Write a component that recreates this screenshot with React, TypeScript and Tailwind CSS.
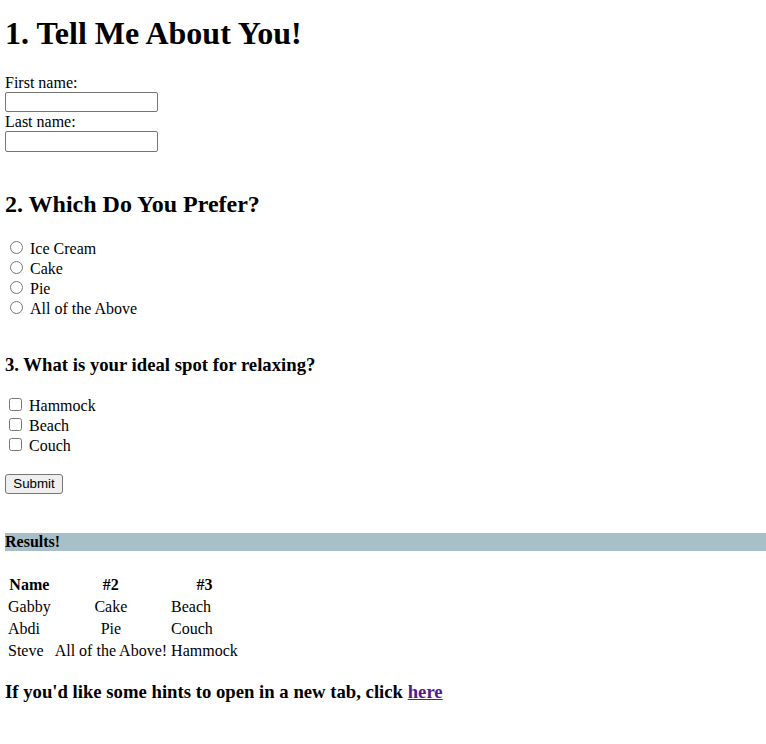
import React from 'react';

const FLAVORS = ['Ice Cream', 'Cake', 'Pie', 'All of the Above'];
const SPOTS = ['Hammock', 'Beach', 'Couch'];
const RESULTS = [
  { name: 'Gabby', second: 'Cake', third: 'Beach' },
  { name: 'Abdi', second: 'Pie', third: 'Couch' },
  { name: 'Steve', second: 'All of the Above!', third: 'Hammock' },
];

export default function App() {
  return (
    <div className="min-h-[744px] bg-white pl-[5px] pt-[15px] font-['Liberation_Serif',serif] text-[16px] text-black">
      <h1 className="text-[32px] font-bold leading-[37px]">1. Tell Me About You!</h1>

      <form className="mt-[21px]" onSubmit={e => e.preventDefault()}>
        <div className="h-[19px] leading-[19px]">First name:</div>
        <input type="text" className="block h-[20px] w-[153px] rounded-[2px] border border-[#767676] bg-white px-[2px]" />
        <div className="h-[19px] leading-[19px]">Last name:</div>
        <input type="text" className="block h-[21px] w-[153px] rounded-[2px] border border-[#767676] bg-white px-[2px]" />

        <h2 className="mt-[38px] text-[24px] font-bold leading-[28px]">2. Which Do You Prefer?</h2>
        <div className="mt-[21px]">
          {FLAVORS.map(f => (
            <label key={f} className="flex h-[20px] leading-[20px]">
              <input type="radio" name="flavor" className="mt-[2px] ml-[5px] mr-[7px] h-[13px] w-[13px] shrink-0" />
              <span>{f}</span>
            </label>
          ))}
        </div>

        <h3 className="mt-[35px] text-[18.72px] font-bold leading-[21px]">3. What is your ideal spot for relaxing?</h3>
        <div className="mt-[21px]">
          {SPOTS.map(s => (
            <label key={s} className="flex h-[20px] leading-[20px]">
              <input type="checkbox" className="mt-[2px] ml-[4px] mr-[7px] h-[13px] w-[13px] shrink-0" />
              <span>{s}</span>
            </label>
          ))}
        </div>

        <button
          type="submit"
          className="mt-[18px] h-[20px] w-[58px] rounded-[3px] border border-[#767676] bg-[#efefef] font-['Liberation_Sans',sans-serif] text-[13.33px] leading-[18px]"
        >
          Submit
        </button>
      </form>

      <div className="mt-[38px] h-[18px] bg-[#a7bfc9] font-bold leading-[18px]">Results!</div>

      <table className="mt-[22px] border-separate border-spacing-[2px]">
        <thead>
          <tr>
            <th className="p-[1px] text-center font-bold leading-[18px]">Name</th>
            <th className="p-[1px] text-center font-bold leading-[18px]">#2</th>
            <th className="p-[1px] text-center font-bold leading-[18px]">#3</th>
          </tr>
        </thead>
        <tbody>
          {RESULTS.map(r => (
            <tr key={r.name}>
              <td className="p-[1px] leading-[18px]">{r.name}</td>
              <td className="p-[1px] text-center leading-[18px]">{r.second}</td>
              <td className="p-[1px] leading-[18px]">{r.third}</td>
            </tr>
          ))}
        </tbody>
      </table>

      <h3 className="mt-[18px] text-[18.72px] font-bold leading-[21px]">
        If you'd like some hints to open in a new tab, click{' '}
        <a href="#" className="text-[#551a8b] underline">here</a>
      </h3>
    </div>
  );
}
